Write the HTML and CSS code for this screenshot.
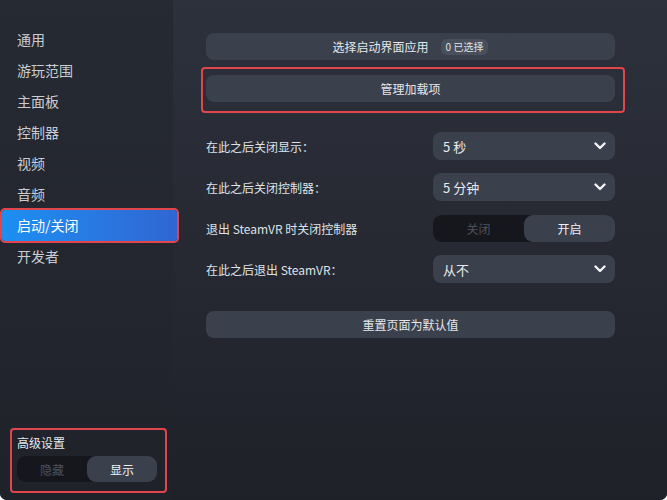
FILE: index.html
```html
<!DOCTYPE html>
<html lang="zh">
<head>
<meta charset="utf-8">
<link rel="stylesheet" href="styles.css">
</head>
<body>
<div class="app">
  <aside class="sidebar">
    <nav class="nav">
      <div class="nav-item">通用</div>
      <div class="nav-item">游玩范围</div>
      <div class="nav-item">主面板</div>
      <div class="nav-item">控制器</div>
      <div class="nav-item">视频</div>
      <div class="nav-item">音频</div>
      <div class="nav-item active">启动/关闭</div>
      <div class="nav-item">开发者</div>
    </nav>
    <div class="advanced">
      <div class="advanced-title">高级设置</div>
      <div class="seg seg-small">
        <div class="seg-off">隐藏</div>
        <div class="seg-on">显示</div>
      </div>
    </div>
  </aside>
  <main class="main">
    <div class="btn">选择启动界面应用<span class="badge">0 已选择</span></div>
    <div class="highlight">
      <div class="btn">管理加载项</div>
    </div>
    <div class="rows">
      <div class="row">
        <div class="label">在此之后关闭显示：</div>
        <div class="select"><span>5 秒</span><svg class="chev" viewBox="0 0 12 8"><path d="M1.5 1.5 L6 6 L10.5 1.5" /></svg></div>
      </div>
      <div class="row">
        <div class="label">在此之后关闭控制器：</div>
        <div class="select"><span>5 分钟</span><svg class="chev" viewBox="0 0 12 8"><path d="M1.5 1.5 L6 6 L10.5 1.5" /></svg></div>
      </div>
      <div class="row">
        <div class="label">退出 SteamVR 时关闭控制器</div>
        <div class="seg seg-wide">
          <div class="seg-off">关闭</div>
          <div class="seg-on">开启</div>
        </div>
      </div>
      <div class="row">
        <div class="label">在此之后退出 SteamVR：</div>
        <div class="select"><span>从不</span><svg class="chev" viewBox="0 0 12 8"><path d="M1.5 1.5 L6 6 L10.5 1.5" /></svg></div>
      </div>
    </div>
    <div class="btn reset">重置页面为默认值</div>
  </main>
</div>
</body>
</html>
```
FILE: styles.css
```css
* { box-sizing: border-box; }
html, body {
  margin: 0;
  padding: 0;
  background: #ffffff;
}
body {
  font-family: "Noto Sans CJK SC", "Noto Sans", sans-serif;
  color: #dfe3e8;
}
.app {
  display: flex;
  width: 667px;
  height: 500px;
  border-radius: 0 0 7px 7px;
  overflow: hidden;
  background: #23262e;
}
.sidebar {
  width: 173px;
  flex: none;
  display: flex;
  flex-direction: column;
  justify-content: space-between;
  background: linear-gradient(180deg, #262a33 0%, #23262e 60%, #1f2229 100%);
}
.nav {
  padding-top: 24px;
  display: flex;
  flex-direction: column;
}
.nav-item {
  height: 31px;
  line-height: 31px;
  padding-left: 17px;
  font-size: 14px;
  color: #c9cdd3;
}
.nav-item.active {
  position: relative;
  z-index: 1;
  margin: 0 -4px 0 2px;
  padding-left: 15px;
  color: #ffffff;
  border-radius: 3px;
  background: linear-gradient(90deg, #1c8ff2 0%, #2a76e0 60%, #2f66d2 100%);
  box-shadow: 0 0 0 2px #e0464b;
}
.advanced {
  margin: 0 0 7px 10px;
  width: 157px;
  border: 2px solid #e0464b;
  border-radius: 4px;
  padding: 4px 8px 9px 5px;
}
.advanced-title {
  font-size: 12px;
  line-height: 18px;
  color: #e6e9ed;
  margin-bottom: 4px;
}
.seg {
  display: flex;
  border-radius: 9px;
  background: #15171c;
}
.seg > div {
  flex: 1;
  display: flex;
  align-items: center;
  justify-content: center;
}
.seg-off {
  color: #4d525c;
}
.seg-on {
  color: #eef1f4;
  background: #3b404d;
  border-radius: 9px;
}
.seg-small {
  height: 26px;
  font-size: 12px;
}
.seg-wide {
  width: 182px;
  height: 27px;
  font-size: 12px;
}
.main {
  flex: 1;
  padding: 33px 52px 0 33px;
  background: linear-gradient(180deg, #2d313c 0%, #272a33 45%, #1f2129 100%);
}
.btn {
  height: 27px;
  border-radius: 8px;
  background: #3b404d;
  display: flex;
  align-items: center;
  justify-content: center;
  font-size: 12px;
  color: #e4e7eb;
}
.badge {
  margin-left: 12px;
  padding: 0 5px;
  height: 16px;
  line-height: 16px;
  font-size: 10px;
  border-radius: 6px;
  background: #4a4f5c;
  color: #dfe2e6;
}
.highlight {
  margin: 7px -10px 0 -5px;
  border: 2px solid #e0464b;
  border-radius: 4px;
  padding: 6px 8px 9px 3px;
}
.rows {
  margin-top: 19px;
  display: flex;
  flex-direction: column;
  gap: 13px;
}
.row {
  display: flex;
  align-items: center;
  justify-content: space-between;
  height: 28px;
}
.label {
  font-size: 12px;
  color: #dfe3e8;
}
.select {
  width: 182px;
  height: 28px;
  border-radius: 8px;
  background: #3b404d;
  display: flex;
  align-items: center;
  justify-content: space-between;
  padding: 0 9px 0 10px;
  font-size: 13px;
  color: #e8ebee;
}
.chev {
  width: 12px;
  height: 8px;
}
.chev path {
  fill: none;
  stroke: #f2f4f6;
  stroke-width: 2.4;
  stroke-linecap: round;
  stroke-linejoin: round;
}
.reset {
  margin-top: 28px;
}
```
